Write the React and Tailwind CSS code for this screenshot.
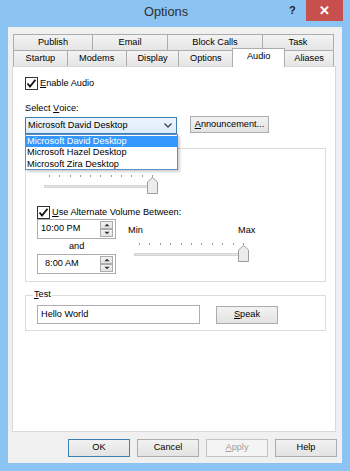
import React from 'react';

const btn =
  'flex items-center justify-center border border-[#acacac] bg-linear-to-b from-[#f2f2f2] to-[#e3e3e3] text-black';

function Check({ label, u, rest }) {
  return (
    <div className="flex items-center gap-[2px] h-[13px]">
      <svg width="13" height="13" viewBox="0 0 13 13">
        <rect x="0.5" y="0.5" width="12" height="12" fill="#fff" stroke="#333" />
        <path d="M2.5 6.5 L5 9.5 L10.5 2.8" fill="none" stroke="#111" strokeWidth="1.8" />
      </svg>
      <span>
        <span className="underline">{u}</span>
        {rest}
      </span>
    </div>
  );
}

function Slider({ width }) {
  return (
    <div className="relative h-[22px]" style={{ width }}>
      <div className="flex justify-between ml-[5px] mr-[5px] pt-[3px]">
        {Array.from({ length: 11 }).map((_, i) => (
          <div key={i} className="w-px h-[2px] bg-[#9a9a9a]" />
        ))}
      </div>
      <div className="mt-[8px] h-[3px] border border-[#d4d4d4] bg-[#e7e7e7]" />
      <svg className="absolute right-0 top-[5px]" width="11" height="17" viewBox="0 0 11 17">
        <path d="M0.5 5 L5.5 0.5 L10.5 5 V16.5 H0.5 Z" fill="#ececec" stroke="#9c9c9c" />
      </svg>
    </div>
  );
}

function Spin({ value, pad }) {
  return (
    <div className="flex items-center justify-between w-[79px] h-[20px] border border-[#abadb3] bg-white pr-[2px]">
      <span className={pad}>{value}</span>
      <div className="flex flex-col">
        {['M1 5 L4 2 L7 5 Z', 'M1 2 L4 5 L7 2 Z'].map((d) => (
          <div key={d} className="w-[13px] h-[8px] border border-[#acacac] bg-linear-to-b from-[#f2f2f2] to-[#e3e3e3] flex items-center justify-center">
            <svg width="8" height="6" viewBox="0 0 8 7">
              <path d={d} fill="#333" />
            </svg>
          </div>
        ))}
      </div>
    </div>
  );
}

const tabCls =
  'flex items-center justify-center border-l border-t border-[#acacac] bg-linear-to-b from-[#f3f3f3] to-[#e5e5e5]';

export default function App() {
  const row1 = [
    ['Publish', 79],
    ['Email', 75],
    ['Block Calls', 95],
    ['Task', 72],
  ];
  const row2 = [
    ['Startup', 54],
    ['Modems', 59],
    ['Display', 53],
    ['Options', 54],
    ['Audio', 52],
    ['Aliases', 49],
  ];
  return (
    <div className="w-[350px] h-[471px] bg-[#8bc3f3] flex flex-col font-['Liberation_Sans',Arial,sans-serif] text-[9.2px] text-black leading-none">
      {/* title bar */}
      <div className="h-[27px] flex items-start">
        <div className="flex-1 pl-[43px] pt-[6px] text-center text-[12.8px] text-[#2f2f2f]">Options</div>
        <div className="w-[14px] pt-[5px] text-[11px] font-bold text-[#222]">?</div>
        <div className="ml-[3px] mr-[7px] w-[37px] h-[21px] bg-[#c7504f] flex items-center justify-center text-white text-[13px] font-bold">
          ✕
        </div>
      </div>

      {/* client */}
      <div className="mx-[8px] h-[436px] bg-[#f0f0f0] pt-[7px]">
        <div className="ml-[5px] w-[321px]">
          <div className="flex h-[16px]">
            {row1.map(([t, w], i) => (
              <div key={t} className={`${tabCls} ${i === row1.length - 1 ? 'border-r' : ''}`} style={{ width: w }}>
                {t}
              </div>
            ))}
          </div>
          <div className="flex h-[16px]">
            {row2.map(([t, w], i) =>
              t === 'Audio' ? (
                <div
                  key={t}
                  className="relative z-10 -mt-[2px] h-[19px] flex justify-center pt-[3px] border-l border-t border-r border-[#acacac] bg-white"
                  style={{ width: w + 1 }}
                >
                  {t}
                </div>
              ) : (
                <div
                  key={t}
                  className={`${tabCls} ${i === row2.length - 1 ? 'border-r' : ''} ${row2[i - 1]?.[0] === 'Audio' ? 'border-l-0' : ''}`}
                  style={{ width: w }}
                >
                  {t}
                </div>
              )
            )}
          </div>
        </div>

        {/* panel */}
        <div className="ml-[4px] w-[324px] h-[366px] border border-[#d9d9d9] bg-white pl-[12px]">
          <div className="mt-[10px]">
            <Check u="E" rest="nable Audio" />
          </div>
          <div className="mt-[13px] h-[12px] flex items-center">
            Select&nbsp;<span className="underline">V</span>oice:
          </div>
          <div className="mt-[1px] flex items-start h-[18px]">
            <div className="relative mt-[1px] w-[152px] h-[17px] border border-[#3c7fb1] bg-linear-to-b from-[#ecf4fc] to-[#dcecfc] flex items-center justify-between pl-[2px] pr-[4px]">
              <span>Microsoft David Desktop</span>
              <svg width="8" height="5" viewBox="0 0 8 5">
                <path d="M0.5 0.5 L4 4 L7.5 0.5" fill="none" stroke="#444" strokeWidth="1.3" />
              </svg>
              <div className="absolute left-[-1px] top-[16px] z-20 w-[153px] h-[36px] border border-[#5b8fc8] bg-white pt-[1px] shadow-[2px_2px_2px_rgba(0,0,0,0.18)]">
                <div className="h-[11px] bg-[#3399ff] text-white flex items-center pl-[1px]">Microsoft David Desktop</div>
                <div className="h-[11.5px] flex items-center pl-[1px]">Microsoft Hazel Desktop</div>
                <div className="h-[11.5px] flex items-center pl-[1px]">Microsoft Zira Desktop</div>
              </div>
            </div>
            <div className={`${btn} ml-[13px] w-[79px] h-[17px]`}>
              <span className="underline">A</span>nnouncement...
            </div>
          </div>

          {/* volume group */}
          <div className="mt-[14px] w-[301px] h-[134px] border border-[#dcdcdc]">
            <div className="ml-[18px] mt-[23px]">
              <Slider width={114} />
            </div>
            <div className="ml-[11px] mt-[12px]">
              <Check u="U" rest="se Alternate Volume Between:" />
            </div>
            <div className="ml-[11px] flex gap-[12px]">
              <div className="flex flex-col">
                <Spin value="10:00 PM" pad="pl-[3px]" />
                <div className="h-[15px] flex items-center pl-[32px]">and</div>
                <Spin value="8:00 AM" pad="pl-[7px]" />
              </div>
              <div className="flex flex-col">
                <div className="mt-[7px] flex w-[130px] h-[10px]">
                  <span className="w-[110px]">Min</span>
                  <span>Max</span>
                </div>
                <div className="ml-[6px] mt-[4px]">
                  <Slider width={115} />
                </div>
              </div>
            </div>
          </div>

          {/* test group */}
          <div className="relative mt-[13px] w-[301px] h-[36px] border border-[#dcdcdc]">
            <div className="absolute left-[7px] top-[-6px] bg-white px-[1px] h-[11px]">
              <span className="underline">T</span>est
            </div>
            <div className="flex items-start mt-[9px] ml-[11px]">
              <div className="w-[163px] h-[19px] border border-[#abadb3] bg-white flex items-center pl-[3px]">Hello World</div>
              <div className={`${btn} ml-[16px] mt-[1px] w-[62px] h-[18px]`}>
                <span className="underline">S</span>peak
              </div>
            </div>
          </div>
        </div>

        {/* bottom buttons */}
        <div className="mt-[7px] flex justify-end gap-[7px] pr-[5px]">
          <div className={`${btn} w-[62px] h-[18px] !border-[#3c7fb1]`}>OK</div>
          <div className={`${btn} w-[62px] h-[18px]`}>Cancel</div>
          <div className="flex items-center justify-center w-[62px] h-[18px] border border-[#c4c4c4] bg-[#f4f4f4] text-[#a0a0a0]">
            <span className="underline">A</span>pply
          </div>
          <div className={`${btn} w-[62px] h-[18px]`}>Help</div>
        </div>
      </div>
    </div>
  );
}
